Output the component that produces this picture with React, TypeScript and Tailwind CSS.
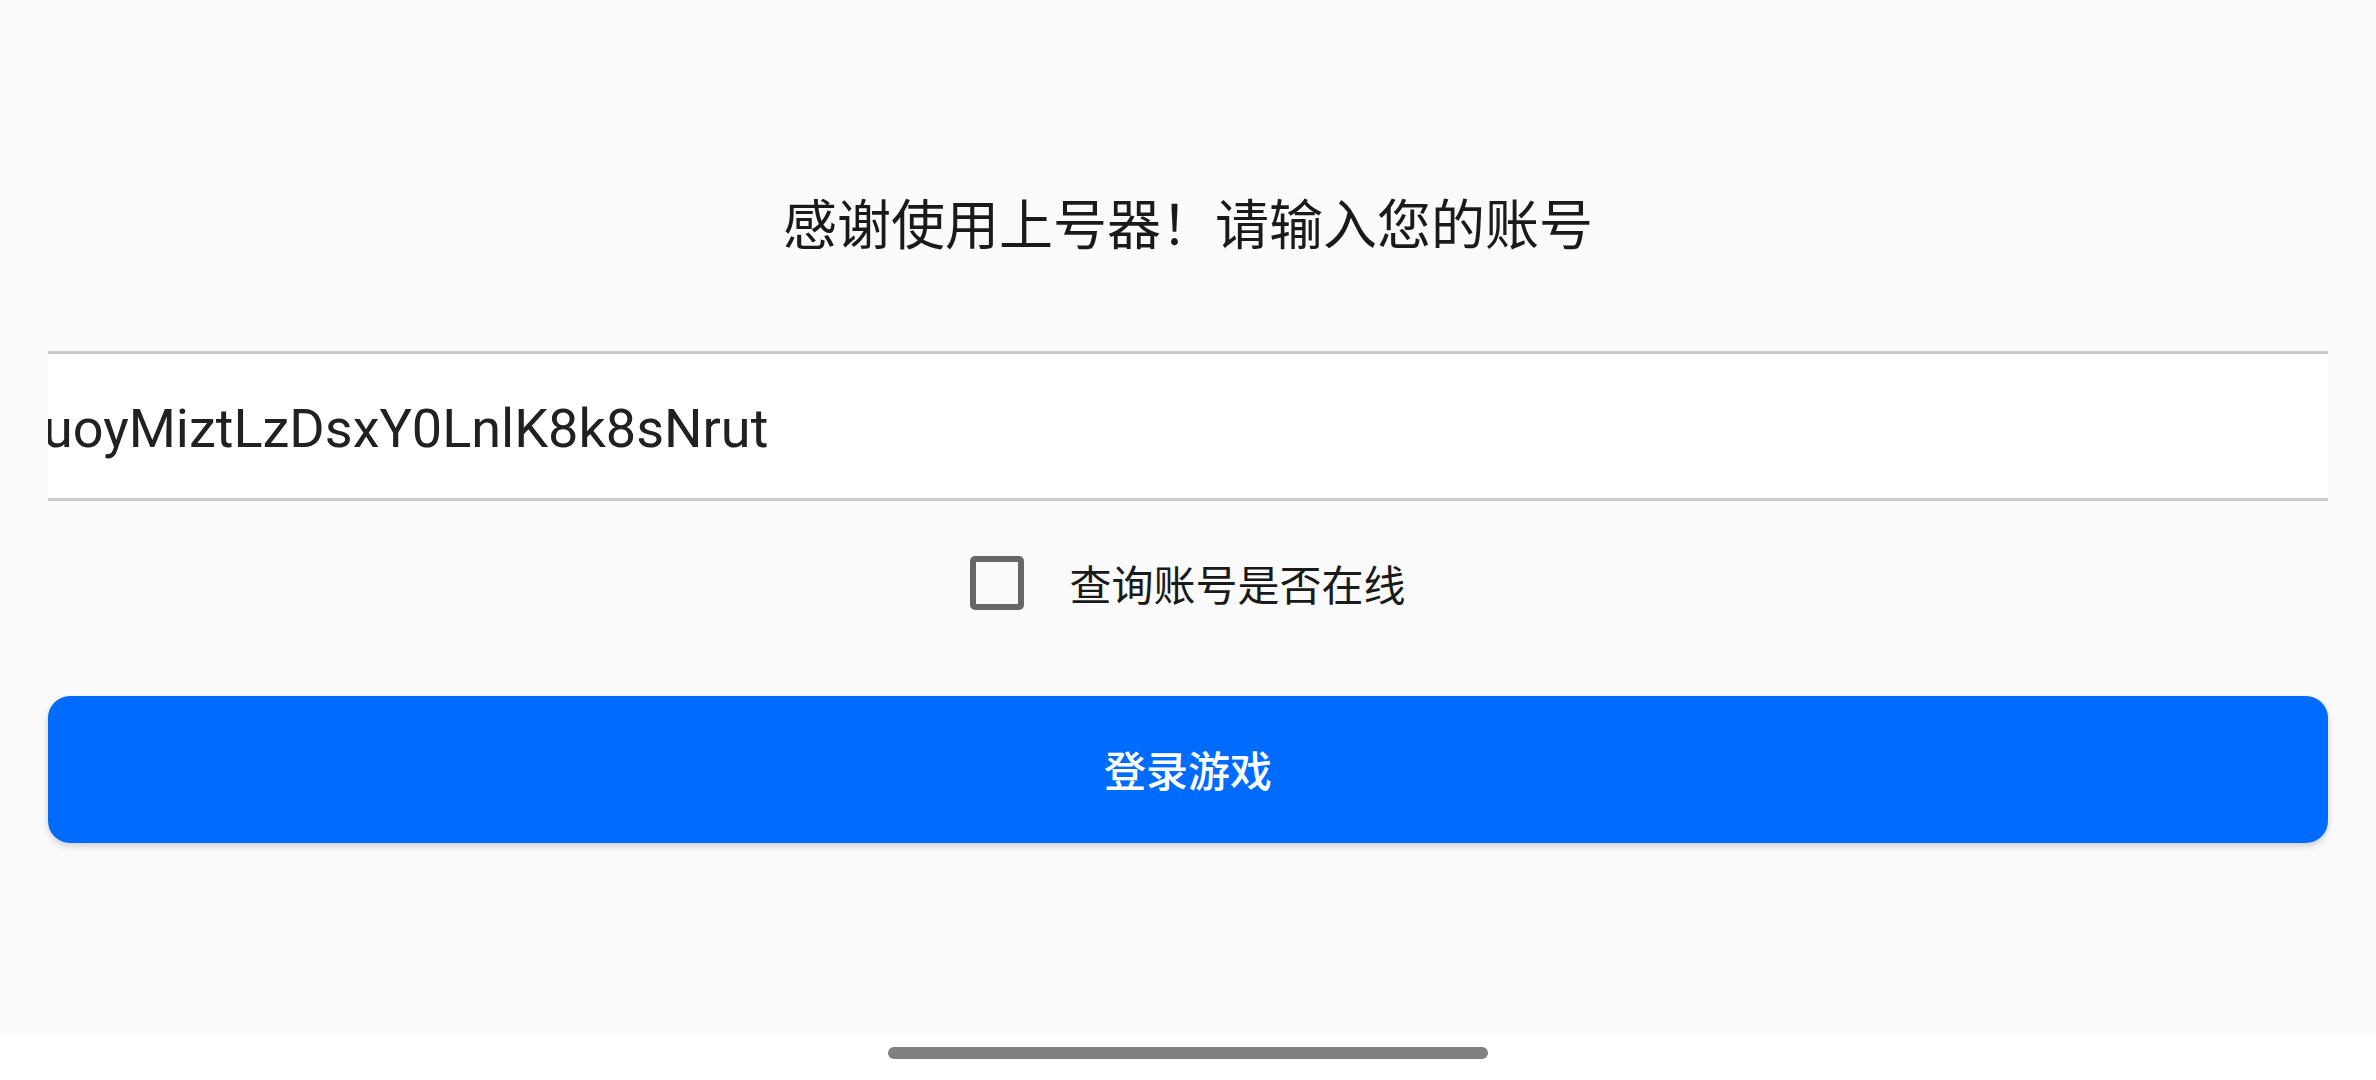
const font = "font-['Roboto','Noto_Sans_CJK_SC',sans-serif]";

const App = () => {
  return (
    <div className={`w-[2376px] h-[1080px] flex flex-col bg-white ${font}`}>
      <main className="h-[1033px] bg-[#fafafa] px-[48px] pt-[186px] flex flex-col">
        <h1 className="text-center text-[54px] leading-[81px] text-[#1a1a1a] font-normal">
          感谢使用上号器！请输入您的账号
        </h1>

        {/* account input, scrolled so the start is hidden */}
        <div className="mt-[84px] h-[150px] border-y-[3px] border-[#c9c9c9] bg-white flex items-center overflow-hidden">
          <span className="-ml-[5px] pt-[6px] whitespace-nowrap text-[54px] leading-[64px] text-[#212121]">
            uoyMiztLzDsxY0LnlK8k8sNrut
          </span>
        </div>

        <label className="mt-[55px] h-[54px] flex items-start justify-center gap-[45px]">
          <span className="shrink-0 w-[54px] h-[54px] border-[6px] border-[#666666] rounded-[5px] bg-transparent" />
          <span className="mt-[4px] text-[42px] leading-[54px] text-[#1a1a1a]">查询账号是否在线</span>
        </label>

        <button className="mt-[86px] h-[147px] pt-[6px] rounded-[22px] bg-[#006bff] text-white text-[42px] font-medium shadow-[0_3px_6px_rgba(0,0,0,0.18)]">
          登录游戏
        </button>
      </main>

      {/* gesture nav bar */}
      <div className="flex-1 flex justify-center pt-[14px]">
        <div className="w-[600px] h-[12px] rounded-full bg-[#808080]" />
      </div>
    </div>
  );
};

export default App;
